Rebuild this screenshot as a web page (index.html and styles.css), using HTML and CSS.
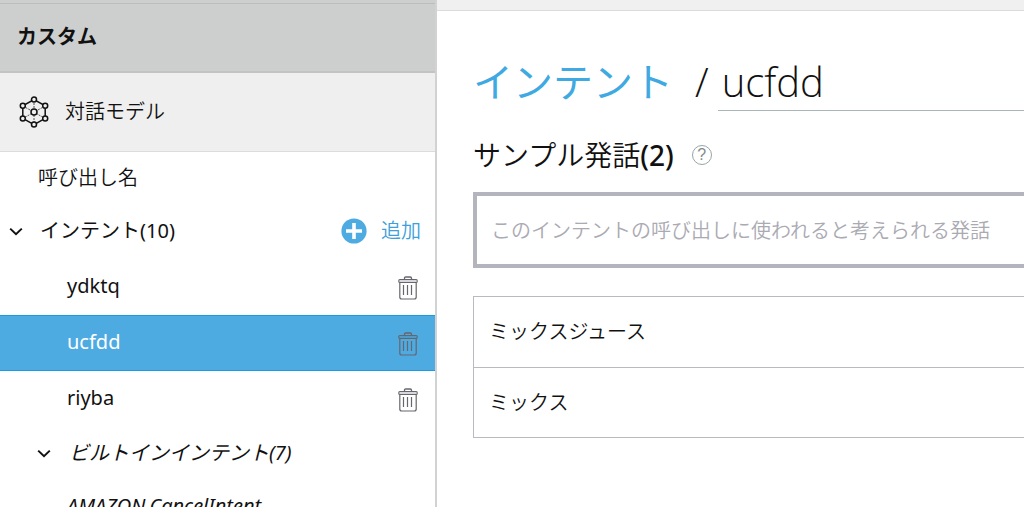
FILE: index.html
```html
<!DOCTYPE html>
<html lang="ja">
<head>
    <meta charset="UTF-8">
    <meta name="viewport" content="width=device-width, initial-scale=1.0">
    <title>インテント / ucfdd</title>
    <link rel="stylesheet" href="styles.css">
</head>
<body>

<svg class="sprite" aria-hidden="true">
    <symbol id="icon-trash" viewBox="0 0 20 24">
        <g fill="none" stroke="currentColor">
            <path d="M6.5 3.5V2.2Q6.5 1 7.8 1h4.4q1.3 0 1.3 1.2v1.3" stroke-width="1.3"/>
            <rect x="0.8" y="3.6" width="18.4" height="2.8" rx="1" stroke-width="1.1"/>
            <path d="M1.8 6.4V21q0 2 2 2h12.4q2 0 2-2V6.4" stroke-width="1.2"/>
            <path d="M5.5 9v10M9.5 9v10M13.5 9v10" stroke-width="1.2"/>
        </g>
    </symbol>
    <symbol id="icon-chevron" viewBox="0 0 14 10">
        <path d="M1.2 2.6L7 8.2 12.8 2.6" fill="none" stroke="currentColor" stroke-width="2"/>
    </symbol>
</svg>

<div class="layout">
    <nav class="sidebar">
        <h2 class="sidebar-title">カスタム</h2>
        <a class="model-link" href="#model">
            <svg class="model-icon" viewBox="0 0 30 32" aria-hidden="true">
                <g fill="none" stroke="#111">
                    <path d="M15 3.6L26.2 9.8v12.6L15 28.6 3.8 22.4V9.8z" stroke-width="1.5"/>
                    <path d="M15 4v25M4 10l22 12.4M26 10L4 22.4" stroke="#555" stroke-width="1" stroke-dasharray="2 1"/>
                </g>
                <g fill="#efefef" stroke="#111" stroke-width="1.5">
                    <circle cx="15" cy="3.6" r="2.5"/>
                    <circle cx="26.2" cy="9.8" r="2.5"/>
                    <circle cx="26.2" cy="22.4" r="2.5"/>
                    <circle cx="15" cy="28.6" r="2.5"/>
                    <circle cx="3.8" cy="22.4" r="2.5"/>
                    <circle cx="3.8" cy="9.8" r="2.5"/>
                    <circle cx="15" cy="16" r="3"/>
                </g>
            </svg>
            対話モデル
        </a>

        <a class="invocation" href="#invocation">呼び出し名</a>
        <div class="row group">
            <button class="toggle" aria-label="インテントを閉じる"><svg class="chevron"><use href="#icon-chevron"/></svg></button>
            <a class="name" href="#intents">インテント(10)</a>
            <button class="add">
                <svg class="plus" viewBox="0 0 26 26" aria-hidden="true">
                    <circle cx="13" cy="13" r="12.6" fill="#4dabe2"/>
                    <path d="M13 5v16M5 13h16" stroke="#fff" stroke-width="3.6"/>
                </svg>
                追加
            </button>
        </div>
        <div class="row intent">
            <a class="name" href="#ydktq">ydktq</a>
            <button class="delete" aria-label="ydktqを削除"><svg class="trash"><use href="#icon-trash"/></svg></button>
        </div>
        <div class="row intent selected">
            <a class="name" href="#ucfdd">ucfdd</a>
            <button class="delete" aria-label="ucfddを削除"><svg class="trash"><use href="#icon-trash"/></svg></button>
        </div>
        <div class="row intent">
            <a class="name" href="#riyba">riyba</a>
            <button class="delete" aria-label="riybaを削除"><svg class="trash"><use href="#icon-trash"/></svg></button>
        </div>
        <div class="row builtin">
            <button class="toggle" aria-label="ビルトインインテントを閉じる"><svg class="chevron"><use href="#icon-chevron"/></svg></button>
            <a class="name" href="#builtin">ビルトインインテント(7)</a>
        </div>
        <div class="row builtin-intent">
            <a class="name" href="#cancel">AMAZON.CancelIntent</a>
        </div>
    </nav>

    <main class="main">
        <div class="topbar"></div>
        <div class="content">
            <h1 class="intent-title">
                <a href="#intents">インテント</a>
                <span class="slash">/</span>
                <input class="intent-name" type="text" value="ucfdd" aria-label="インテント名">
            </h1>
            <h2 class="section-title">
                <label for="utterance">サンプル発話<span class="count">(2)</span></label>
                <button class="help" aria-label="ヘルプ">?</button>
            </h2>
            <input class="utterance-input" id="utterance" type="text" placeholder="このインテントの呼び出しに使われると考えられる発話">
            <ul class="utterances">
                <li>ミックスジュース</li>
                <li>ミックス</li>
            </ul>
        </div>
    </main>
</div>

</body>
</html>
```
FILE: styles.css
```css
* {
    box-sizing: border-box;
}
body {
    margin: 0;
    height: 100vh;
    overflow: hidden;
    font-family: "Noto Sans", "Noto Sans CJK JP", sans-serif;
    font-size: 20px;
    line-height: 28px;
    color: #111;
    background-color: #fff;
}
a {
    color: inherit;
    text-decoration: none;
}
button {
    padding: 0;
    border: none;
    background: none;
    font: inherit;
    color: inherit;
    cursor: pointer;
}
h1, h2 {
    margin: 0;
}
svg {
    display: block;
}
.sprite {
    display: none;
}
.layout {
    display: flex;
    height: 100vh;
}

/* sidebar */
.sidebar {
    flex: 0 0 437px;
    overflow: hidden;
    border-right: 2px solid #d2d2d2;
}
.sidebar-title {
    display: flex;
    align-items: center;
    height: 73px;
    padding-left: 17px;
    border-top: 3px solid #cdcfce;
    border-bottom: 2px solid #c2c4c3;
    background-color: #cdcfce;
    box-shadow: inset 0 1px #bcbebd;
    font-size: 20px;
    font-weight: bold;
}
.model-link {
    display: flex;
    align-items: center;
    gap: 16px;
    height: 79px;
    padding-left: 19px;
    border-bottom: 1px solid #dcdcdc;
    background-color: #efefef;
    font-weight: 350;
}
.model-icon {
    width: 30px;
    height: 32px;
}
.invocation {
    display: flex;
    align-items: center;
    height: 51px;
    padding-left: 38px;
    font-weight: 350;
}
.row {
    display: flex;
    align-items: center;
    height: 56px;
    padding-right: 14px;
}
.row .name {
    flex: 1;
}
.group {
    gap: 17px;
    padding-left: 9px;
}
.chevron {
    width: 14px;
    height: 10px;
}
.add {
    display: flex;
    align-items: center;
    gap: 14px;
    color: #3d9fdb;
    font-weight: 350;
}
.plus {
    width: 26px;
    height: 26px;
}
.intent {
    padding: 0 17px 2px 67px;
}
.delete {
    padding-top: 3px;
}
.trash {
    width: 20px;
    height: 24px;
    color: #66666e;
}
.selected {
    border-top: 1px solid #1c9be0;
    border-bottom: 1px solid #1c9be0;
    background-color: #4dabe2;
    color: #fff;
}
.builtin {
    gap: 18px;
    height: 51px;
    padding-left: 37px;
    font-style: italic;
}
.builtin-intent {
    padding-left: 67px;
    font-style: italic;
}

/* intent editor */
.main {
    flex: 1;
    min-width: 0;
}
.topbar {
    height: 11px;
    border-bottom: 1px solid #dcdcdc;
    background-color: #f0f0f0;
}
.content {
    padding: 42px 0 0 36px;
}
.intent-title {
    display: flex;
    align-items: center;
    height: 58px;
    font-family: "Open Sans", "Noto Sans CJK JP", sans-serif;
    font-size: 40px;
    font-weight: 300;
    line-height: 56px;
}
.intent-title a {
    color: #3fa9e1;
    font-weight: 400;
}
.slash {
    margin: 0 9px 0 22px;
}
.intent-name {
    flex: 1;
    min-width: 0;
    height: 58px;
    padding: 0 4px;
    border: none;
    border-bottom: 1px solid #aab7b8;
    background: none;
    font: inherit;
    color: inherit;
}
.section-title {
    display: flex;
    align-items: center;
    gap: 18px;
    height: 81px;
    padding-top: 6px;
    font-size: 28px;
    font-weight: 350;
}
.count {
    font-weight: 500;
}
.help {
    width: 20px;
    height: 20px;
    border: 1px solid #95a5a6;
    border-radius: 50%;
    color: #7f8c8d;
    font-family: "Liberation Sans", sans-serif;
    font-size: 16px;
    line-height: 18px;
}
.utterance-input {
    display: block;
    width: 100%;
    height: 76px;
    padding: 0 14px;
    border: 4px solid #b4b4be;
    border-right: none;
    font: inherit;
    font-weight: 350;
}
.utterance-input::placeholder {
    color: #aaaab2;
}
.utterances {
    margin: 28px 0 0;
    padding: 0;
    border: 1px solid #b9b9c1;
    border-right: none;
    list-style: none;
}
.utterances li {
    display: flex;
    align-items: center;
    height: 70px;
    padding-left: 15px;
    font-weight: 350;
}
.utterances li + li {
    border-top: 1px solid #b9b9c1;
}
```
